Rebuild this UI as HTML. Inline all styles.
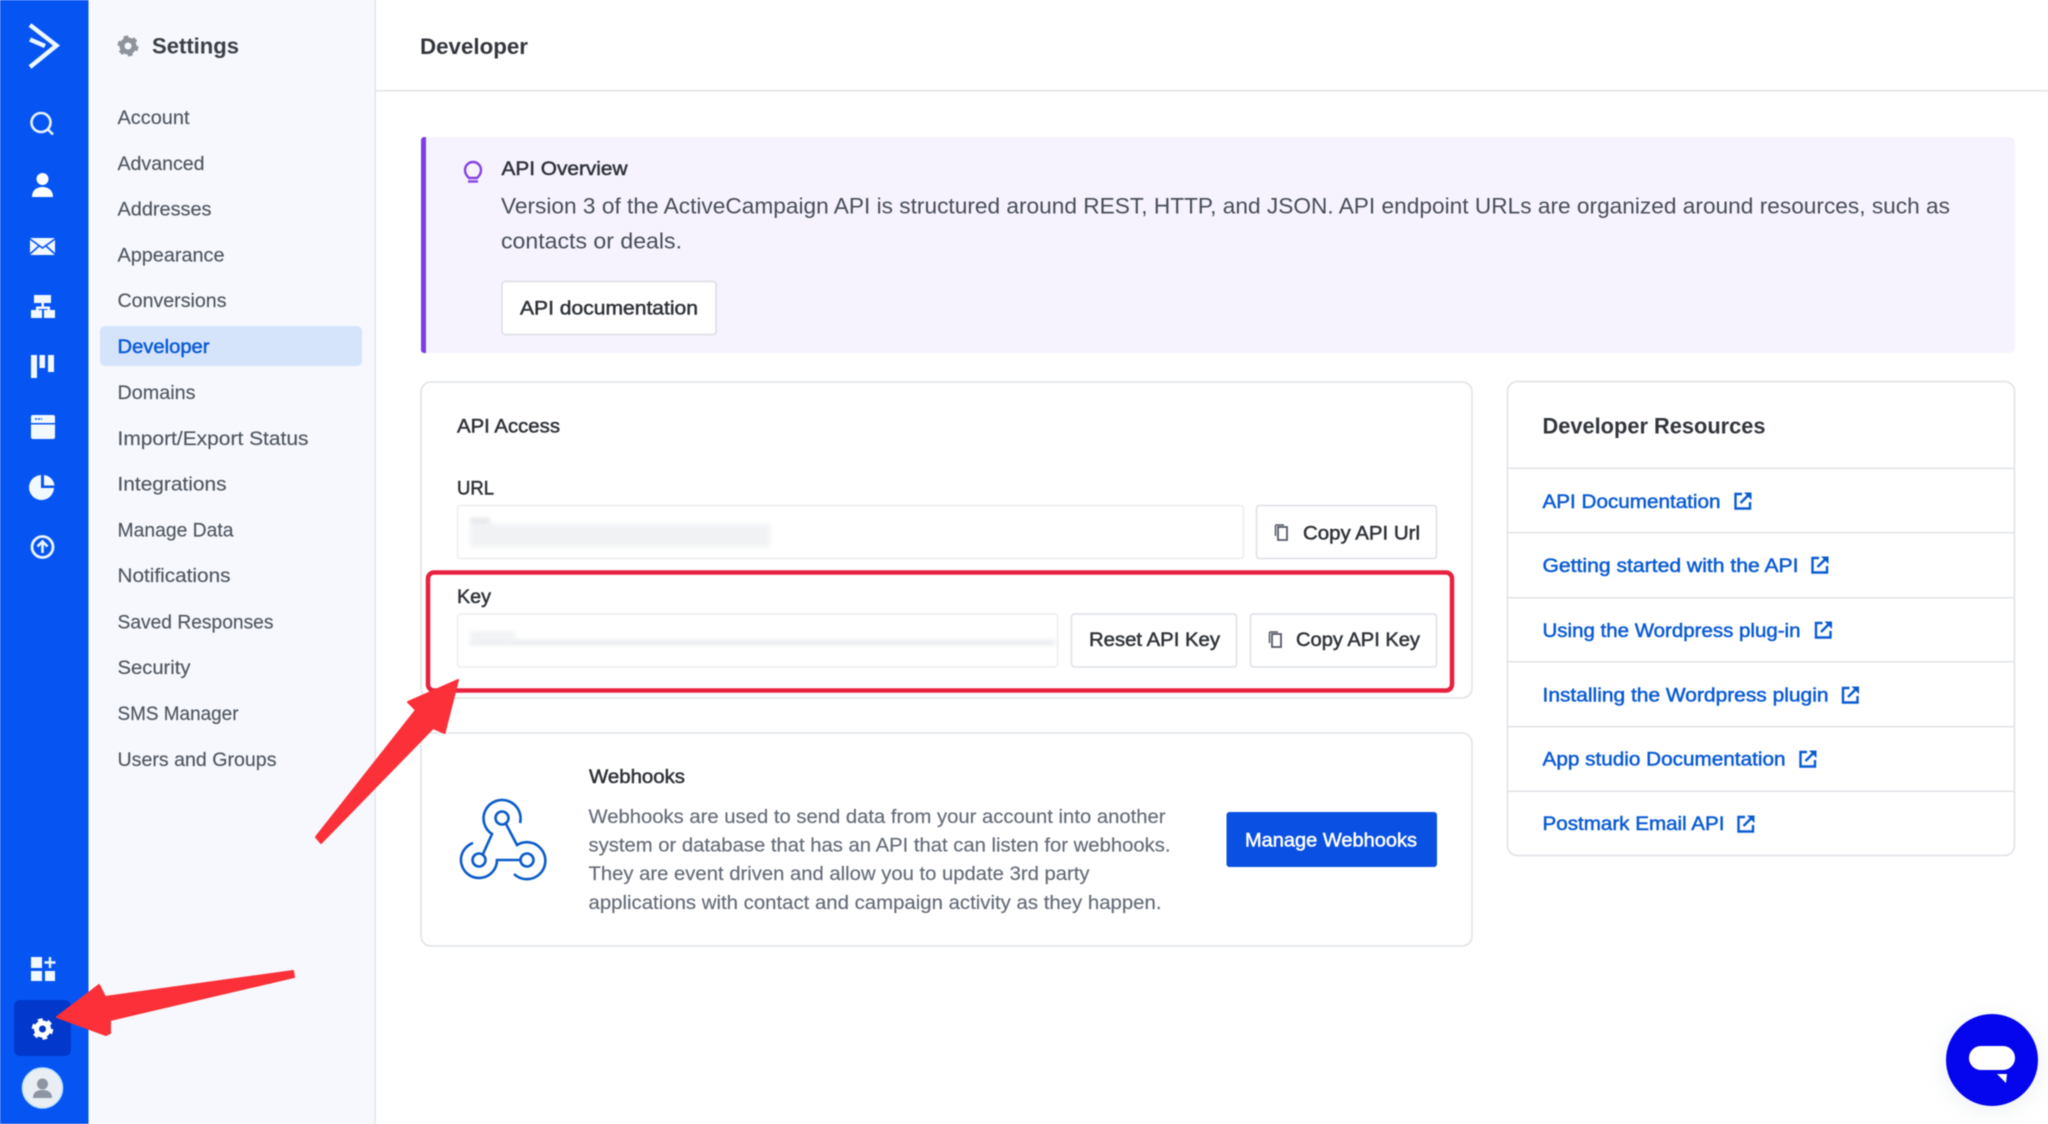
<!DOCTYPE html>
<html lang="en"><head><meta charset="utf-8"><title>Developer Settings</title>
<style>
html,body{margin:0;padding:0;width:2048px;height:1124px;overflow:hidden;background:#fff}
svg{display:block;filter:blur(.5px)}
text{font-family:"Liberation Sans",sans-serif;font-size:19.5px;fill:#565c66}
.n{font-size:19.5px;fill:#4f555f;color:#4f555f;stroke:currentColor;stroke-width:.15;paint-order:stroke}
.m{stroke:currentColor;stroke-width:.5;paint-order:stroke}
.d{fill:#2f3338;color:#2f3338}
.l{fill:#0b5bd3;color:#0b5bd3}
.p{fill:#646b77;color:#646b77;stroke:currentColor;stroke-width:.15;font-size:19.5px}
.card{fill:#fff;stroke:#dfe2e6;stroke-width:1.5}
.btn{fill:#fff;stroke:#dcdfe3;stroke-width:1.5}
.inp{fill:#fff;stroke:#eceef0;stroke-width:1.5}
.ic{fill:none;stroke:#e6f3ff;stroke-width:2.6}
.ex{fill:none;stroke:#0b5bd3;stroke-width:2.4}
</style></head><body>
<svg width="2048" height="1124" viewBox="0 0 2048 1124" xmlns="http://www.w3.org/2000/svg">
<defs>
<filter id="bl" x="-10%" y="-50%" width="120%" height="200%"><feGaussianBlur stdDeviation="2.5"/></filter>
<filter id="sh" x="-40%" y="-40%" width="180%" height="180%"><feGaussianBlur stdDeviation="10"/></filter>
<g id="ext"><path class="ex" d="M8 2H1.500v14.500H16V10"/><path class="ex" d="M6.500 11L14 3.500"/><path d="M10 0.500h7.500V8z" fill="#0b5bd3"/></g>
<g id="copy"><path d="M3 3h9v13H3z" fill="none" stroke="#555b65" stroke-width="1.800"/><path d="M0.500 1v11M0.500 1H9" fill="none" stroke="#555b65" stroke-width="1.500"/></g>
</defs>

<rect width="2048" height="1124" fill="#fff"/>
<!-- sidebars -->
<rect x="88" width="287" height="1124" fill="#f6f8fd"/>
<rect x="374.500" width="1.500" height="1124" fill="#e2e5ea"/>
<rect width="88.500" height="1124" fill="#0655f3"/>
<rect x="376" y="90" width="1672" height="1.500" fill="#e0e3e7"/>

<!-- rail icons -->
<path d="M30 25L56.500 45.500L30 67M30 39.500L45 46" fill="none" stroke="#eef8ff" stroke-width="4.400"/>
<circle cx="41" cy="122.500" r="9.500" class="ic"/><path d="M48 129.500l5 5" class="ic"/>
<circle cx="42.500" cy="179" r="6" fill="#fff"/><path d="M32 197c0-7 5-10 10.500-10s10.500 3 10.500 10z" fill="#fff"/>
<rect x="30" y="238" width="25" height="17" rx="1.500" fill="#f1f8ff"/><path d="M30 239l12.500 9 12.500-9M30 254l9-8M55 254l-9-8" fill="none" stroke="#0655f3" stroke-width="1.600"/>
<path d="M34 295h17v8H34zM31 310h11v8H31zM44 310h11v8H44zM41.500 303h2.500v4h-2.500zM36 306.500h14V310h-2.500V309H38.500v1H36z" fill="#f1f8ff"/>
<path d="M31 355h6v23h-6zM39.500 355h5.500v13h-5.500zM48 355h6v17h-6z" fill="#f1f8ff"/>
<path d="M31 417a2 2 0 0 1 2-2h20a2 2 0 0 1 2 2v6H31zM31 424.500h24v12.500a2 2 0 0 1-2 2H33a2 2 0 0 1-2-2z" fill="#f1f8ff"/><path d="M35 419h7" stroke="#0655f3" stroke-width="1.500" stroke-dasharray="2 1"/>
<path d="M41 475v13h13a12.500 12.500 0 1 1-13-13z" fill="#f1f8ff"/><path d="M44 475a12 12 0 0 1 10.500 10.500H44z" fill="#f1f8ff"/>
<circle cx="42.500" cy="547" r="10.500" fill="none" stroke="#eaf5ff" stroke-width="2.800"/><path d="M42.500 553v-11M37.500 546.500l5-5 5 5" fill="none" stroke="#eaf5ff" stroke-width="2.600"/>
<path d="M31 957h11v11H31zM31 971h11v10H31zM45 971h10v10H45z" fill="#f1f8ff"/><path d="M50 957v11M44.500 962.500h11" stroke="#e6f3ff" stroke-width="2.400"/>
<rect x="14" y="1000" width="57" height="56" rx="6" fill="#0238cb"/>
<circle cx="42.500" cy="1029" r="6" fill="none" stroke="#fff" stroke-width="5"/><circle cx="42.500" cy="1029" r="9" fill="none" stroke="#fff" stroke-width="3.500" stroke-dasharray="4.700 4.720"/>
<circle cx="42.500" cy="1088" r="20" fill="#e9eef4" stroke="#bfe2ff" stroke-width="1.500"/><circle cx="42.500" cy="1084" r="5.500" fill="#8d95a3"/><path d="M33 1098c0-6 4-8 9.500-8s9.500 2 9.500 8z" fill="#8d95a3"/>

<!-- settings nav -->
<circle cx="128" cy="46" r="6" fill="none" stroke="#8e939c" stroke-width="5"/><circle cx="128" cy="46" r="8.500" fill="none" stroke="#8e939c" stroke-width="4" stroke-dasharray="4.500 4.400"/>
<text x="152" y="53.500" textLength="87" lengthAdjust="spacingAndGlyphs" style="font-size:22.500px;font-weight:700;fill:#3b4048">Settings</text>
<rect x="100" y="326" width="262" height="40" rx="5" fill="#d5e4fb"/>
<text class="n" x="117.500" y="124" textLength="72" lengthAdjust="spacingAndGlyphs">Account</text>
<text class="n" x="117.500" y="170" textLength="87" lengthAdjust="spacingAndGlyphs">Advanced</text>
<text class="n" x="117.500" y="215.500" textLength="94" lengthAdjust="spacingAndGlyphs">Addresses</text>
<text class="n" x="117.500" y="261.500" textLength="107" lengthAdjust="spacingAndGlyphs">Appearance</text>
<text class="n" x="117.500" y="307" textLength="109" lengthAdjust="spacingAndGlyphs">Conversions</text>
<text class="m" x="117.500" y="353" textLength="92" lengthAdjust="spacingAndGlyphs" style="fill:#0a5ad6;color:#0a5ad6">Developer</text>
<text class="n" x="117.500" y="399" textLength="78" lengthAdjust="spacingAndGlyphs">Domains</text>
<text class="n" x="117.500" y="445" textLength="191" lengthAdjust="spacingAndGlyphs">Import/Export Status</text>
<text class="n" x="117.500" y="490.500" textLength="109" lengthAdjust="spacingAndGlyphs">Integrations</text>
<text class="n" x="117.500" y="536.500" textLength="116" lengthAdjust="spacingAndGlyphs">Manage Data</text>
<text class="n" x="117.500" y="582" textLength="113" lengthAdjust="spacingAndGlyphs">Notifications</text>
<text class="n" x="117.500" y="628.500" textLength="156" lengthAdjust="spacingAndGlyphs">Saved Responses</text>
<text class="n" x="117.500" y="674" textLength="73" lengthAdjust="spacingAndGlyphs">Security</text>
<text class="n" x="117.500" y="720" textLength="121" lengthAdjust="spacingAndGlyphs">SMS Manager</text>
<text class="n" x="117.500" y="766" textLength="159" lengthAdjust="spacingAndGlyphs">Users and Groups</text>

<!-- title -->
<text x="420" y="54" textLength="108" lengthAdjust="spacingAndGlyphs" style="font-size:22.500px;font-weight:700;fill:#33373d">Developer</text>

<!-- banner -->
<rect x="421" y="137" width="1594" height="216" rx="5" fill="#f6f3ff"/>
<path d="M426 137h-2a3 3 0 0 0-3 3v210a3 3 0 0 0 3 3h2z" fill="#7b3ee6"/>
<path d="M469 178c-2-2-4-4-4-8a8 8 0 0 1 16 0c0 4-2 6-4 8z" fill="none" stroke="#8843e0" stroke-width="2.400"/><path d="M468 181.500h10" stroke="#8843e0" stroke-width="2.400"/>
<text class="m d" x="501.500" y="175" textLength="126" lengthAdjust="spacingAndGlyphs">API Overview</text>
<text x="501" y="213.500" textLength="1449" lengthAdjust="spacingAndGlyphs" style="font-size:22px;fill:#474d57">Version 3 of the ActiveCampaign API is structured around REST, HTTP, and JSON. API endpoint URLs are organized around resources, such as</text>
<text x="501" y="248.500" textLength="181" lengthAdjust="spacingAndGlyphs" style="font-size:22px;fill:#474d57">contacts or deals.</text>
<rect class="btn" x="502" y="281.500" width="214" height="53" rx="3"/>
<text class="m d" x="520" y="314.500" textLength="178" lengthAdjust="spacingAndGlyphs">API documentation</text>

<!-- API access -->
<rect class="card" x="421" y="382" width="1051" height="316" rx="10"/>
<text class="m d" x="457" y="432.500" textLength="103" lengthAdjust="spacingAndGlyphs">API Access</text>
<text class="m d" x="457" y="494.500" textLength="37" lengthAdjust="spacingAndGlyphs">URL</text>
<rect class="inp" x="457.500" y="505.500" width="786" height="53" rx="3"/>
<g filter="url(#bl)"><rect x="470" y="518" width="20" height="5" fill="#e2e4e8"/><rect x="470" y="524" width="300" height="23" fill="#f0f2f4"/></g>
<rect class="btn" x="1256.500" y="505.500" width="180" height="53" rx="3"/>
<use href="#copy" x="1275" y="524"/>
<text class="m d" x="1303" y="539.500" textLength="117" lengthAdjust="spacingAndGlyphs">Copy API Url</text>

<text class="m d" x="457" y="603" textLength="34" lengthAdjust="spacingAndGlyphs">Key</text>
<rect class="inp" x="457.500" y="614" width="600" height="53" rx="3"/>
<g filter="url(#bl)"><rect x="470" y="632" width="45" height="6" fill="#eef0f2"/><rect x="470" y="640" width="585" height="5" fill="#e8eaee"/></g>
<rect class="btn" x="1071.500" y="614" width="165" height="53" rx="3"/>
<text class="m d" x="1089" y="646" textLength="131" lengthAdjust="spacingAndGlyphs">Reset API Key</text>
<rect class="btn" x="1250.500" y="614" width="186" height="53" rx="3"/>
<use href="#copy" x="1269" y="631"/>
<text class="m d" x="1296" y="646" textLength="124" lengthAdjust="spacingAndGlyphs">Copy API Key</text>
<rect x="428" y="572.500" width="1024" height="118" rx="6" fill="none" stroke="#e8213f" stroke-width="4.500"/>

<!-- webhooks -->
<rect class="card" x="421" y="733" width="1051" height="213" rx="10"/>
<g fill="none" stroke="#0b5cc8" stroke-width="2.600">
<circle cx="502" cy="818" r="6.500"/><circle cx="479" cy="860" r="6.500"/><circle cx="527" cy="860" r="6.500"/>
<path d="M520 823A18.500 18.500 0 1 0 492 834L483 854"/>
<path d="M506 824L517 845A18.500 18.500 0 1 1 514 874"/>
<path d="M473 843A18 18 0 1 0 497 860H520"/>
</g>
<text class="m d" x="589" y="783" textLength="96" lengthAdjust="spacingAndGlyphs">Webhooks</text>
<text class="p" x="588.500" y="823" textLength="577" lengthAdjust="spacingAndGlyphs">Webhooks are used to send data from your account into another</text>
<text class="p" x="588.500" y="851.500" textLength="582" lengthAdjust="spacingAndGlyphs">system or database that has an API that can listen for webhooks.</text>
<text class="p" x="588.500" y="880" textLength="501" lengthAdjust="spacingAndGlyphs">They are event driven and allow you to update 3rd party</text>
<text class="p" x="588.500" y="909" textLength="573" lengthAdjust="spacingAndGlyphs">applications with contact and campaign activity as they happen.</text>
<rect x="1226.500" y="812" width="210.500" height="55" rx="3" fill="#0a50e2"/>
<text class="m" x="1245" y="846.500" textLength="172" lengthAdjust="spacingAndGlyphs" style="fill:#fff;color:#fff">Manage Webhooks</text>

<!-- resources -->
<rect class="card" x="1507.500" y="381.500" width="507" height="474" rx="10"/>
<text x="1542.500" y="433.500" textLength="223" lengthAdjust="spacingAndGlyphs" style="font-size:22.500px;font-weight:700;fill:#33373d">Developer Resources</text>
<g fill="#e0e3e7">
<rect x="1507" y="467.500" width="508" height="1.500"/><rect x="1507" y="532" width="508" height="1.500"/><rect x="1507" y="597" width="508" height="1.500"/><rect x="1507" y="661" width="508" height="1.500"/><rect x="1507" y="726" width="508" height="1.500"/><rect x="1507" y="790.500" width="508" height="1.500"/>
</g>
<text class="m l" x="1542.500" y="508" textLength="178" lengthAdjust="spacingAndGlyphs">API Documentation</text><use href="#ext" x="1734" y="492"/>
<text class="m l" x="1542.500" y="572" textLength="256" lengthAdjust="spacingAndGlyphs">Getting started with the API</text><use href="#ext" x="1811" y="556"/>
<text class="m l" x="1542.500" y="637" textLength="258" lengthAdjust="spacingAndGlyphs">Using the Wordpress plug-in</text><use href="#ext" x="1814.500" y="621"/>
<text class="m l" x="1542.500" y="701.500" textLength="286" lengthAdjust="spacingAndGlyphs">Installing the Wordpress plugin</text><use href="#ext" x="1841.500" y="686"/>
<text class="m l" x="1542.500" y="765.500" textLength="243" lengthAdjust="spacingAndGlyphs">App studio Documentation</text><use href="#ext" x="1799" y="750"/>
<text class="m l" x="1542.500" y="830" textLength="182" lengthAdjust="spacingAndGlyphs">Postmark Email API</text><use href="#ext" x="1737" y="815"/>

<!-- arrows -->
<path d="M458 680L408 702L416 710L316 837L321 843L433 728L444.500 733Z" fill="#fb3038" stroke="#fb3038" stroke-width="2" stroke-linejoin="round"/>
<path d="M57 1017L99 985L105 997L293 971L294 977L110 1020L110 1033L106 1035Z" fill="#fb3038" stroke="#fb3038" stroke-width="2" stroke-linejoin="round"/>

<!-- chat -->
<circle cx="1992" cy="1064" r="48" fill="#cfd6dc" opacity=".35" filter="url(#sh)"/>
<circle cx="1992" cy="1060" r="46" fill="#0505ee"/>
<rect x="1969" y="1046" width="46" height="24" rx="12" fill="#fff"/>
<path d="M1997 1074h10l-1 9z" fill="#fff"/>
</svg>
</body></html>
